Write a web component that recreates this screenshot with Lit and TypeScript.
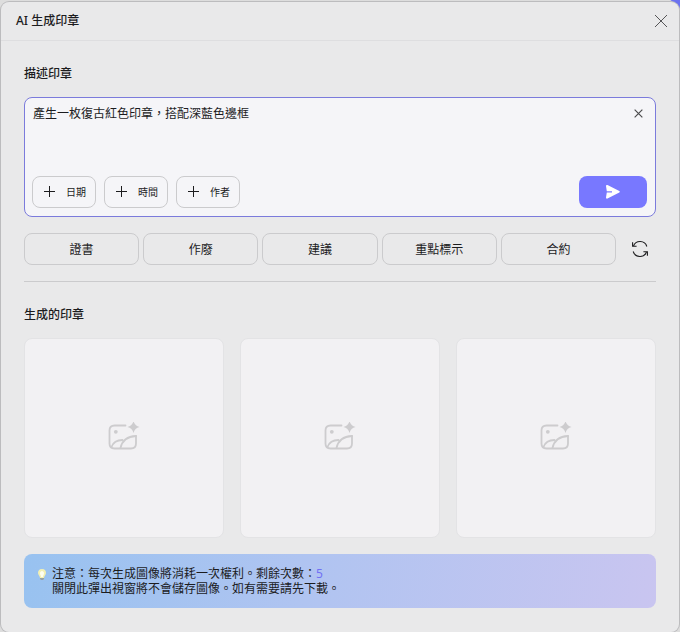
import { LitElement, html, css, svg } from "lit";
import { customElement, state } from "lit/decorators.js";

const TAGS = ["日期", "時間", "作者"];
const PRESETS = ["證書", "作廢", "建議", "重點標示", "合約"];

const crossIcon = svg`<path d="M2 2L14 14M14 2L2 14" fill="none" stroke="currentColor" />`;

@customElement("stamp-slot")
class StampSlot extends LitElement {
  static styles = css`
    :host {
      display: flex;
      align-items: center;
      justify-content: center;
      box-sizing: border-box;
      aspect-ratio: 1;
      border: 1px solid #e3e3e5;
      border-radius: 8px;
      background: #f2f1f3;
      color: #cdccce;
    }
    .picture {
      display: block;
      width: 32px;
      height: 32px;
    }
  `;

  render() {
    return html`
      <svg class="picture" viewBox="0 0 32 32" aria-hidden="true">
        <g fill="none" stroke="currentColor" stroke-width="1.800" stroke-linecap="round">
          <path d="M17.500 3.500H6.500Q1.500 3.500 1.500 8.500V21.500Q1.500 26.500 6.500 26.500H23Q28 26.500 28 21.500V14" />
          <path d="M3.500 25Q6 18 14.500 18" />
          <path d="M12.500 26Q15 14.500 28 14" />
        </g>
        <circle cx="7.800" cy="9.800" r="1.900" fill="currentColor" />
        <path d="M25.500 -1Q26.800 4 31.500 5Q26.800 6 25.500 11Q24.200 6 19.500 5Q24.200 4 25.500 -1Z" fill="currentColor" />
      </svg>
    `;
  }
}

@customElement("app-root")
class AppRoot extends LitElement {
  @state() private prompt = "產生一枚復古紅色印章，搭配深藍色邊框";

  static styles = css`
    :host {
      display: block;
      box-sizing: border-box;
      min-height: 100vh;
      padding: 2px 1px 1px;
      background: linear-gradient(to bottom left, #6c72f0 6px, #dddddd 7px);
      font-family: "Noto Sans", "Noto Sans CJK TC", sans-serif;
      font-size: 12px;
      line-height: 18px;
      color: #1c1c1e;
    }
    *,
    *::before {
      box-sizing: border-box;
    }
    button,
    textarea {
      margin: 0;
      padding: 0;
      font: inherit;
      color: inherit;
      background: none;
      border: 0;
    }
    button {
      cursor: pointer;
    }
    svg {
      display: block;
      flex: none;
    }
    .dialog {
      min-height: calc(100vh - 3px);
      border-radius: 8px;
      background: #e9e9ea;
      box-shadow: 0 0 0 1px #bcbcbe;
    }
    .header {
      display: flex;
      align-items: center;
      justify-content: space-between;
      height: 39px;
      padding: 0 10px 1px 15px;
      border-bottom: 1px solid #dedee0;
    }
    .title,
    .heading {
      margin: 0;
      font-size: 12px;
      line-height: 18px;
      font-weight: 500;
    }
    .close {
      display: flex;
      color: #555557;
    }
    .body {
      display: flex;
      flex-direction: column;
      gap: 16px;
      padding: 24px 23px;
    }
    .heading {
      margin-bottom: -2px;
    }
    .composer {
      display: flex;
      flex-direction: column;
      justify-content: space-between;
      min-height: 120px;
      padding: 7px 8px 8px 7px;
      border: 1px solid #7b7bdc;
      border-radius: 8px;
      background: #f5f5f8;
    }
    .entry {
      display: flex;
      align-items: flex-start;
      gap: 8px;
    }
    .prompt {
      display: block;
      flex: 1;
      min-width: 0;
      height: 64px;
      padding-left: 1px;
      resize: none;
      outline: none;
    }
    .clear {
      display: flex;
      padding: 4px;
      color: #4a4a4c;
    }
    .tools {
      display: flex;
      align-items: center;
      gap: 8px;
    }
    .tag {
      display: flex;
      align-items: center;
      justify-content: space-between;
      width: 64px;
      height: 32px;
      padding: 0 9px;
      border: 1px solid #cbcbcd;
      border-radius: 8px;
      font-size: 10px;
    }
    .send {
      display: flex;
      align-items: center;
      justify-content: center;
      width: 68px;
      height: 32px;
      margin-left: auto;
      border-radius: 8px;
      background: #7878ff;
      color: #ffffff;
    }
    .presets {
      display: flex;
      align-items: center;
      gap: 4px;
    }
    .preset {
      flex: 1;
      height: 32px;
      padding-top: 1px;
      border: 1px solid #cbcbcd;
      border-radius: 8px;
    }
    .refresh {
      display: flex;
      align-items: center;
      justify-content: center;
      width: 36px;
      height: 32px;
      padding-left: 4px;
    }
    .rule {
      width: 100%;
      height: 1px;
      margin: 0;
      border: 0;
      background: #cbcbcd;
    }
    .results {
      padding-top: 8px;
    }
    .slots {
      display: grid;
      grid-template-columns: repeat(3, 1fr);
      gap: 16px;
    }
    .notice {
      display: flex;
      gap: 4px;
      padding: 12px;
      border-radius: 8px;
      background: linear-gradient(100deg, #98c2f0, #b0c4f1 45%, #c9c5f0);
      line-height: 15px;
    }
    .text {
      margin: 0;
    }
    .count {
      color: #7070f4;
    }
  `;

  render() {
    return html`
      <main class="dialog" role="dialog" aria-labelledby="title">
        <header class="header">
          <h1 class="title" id="title">AI 生成印章</h1>
          <button class="close" type="button" aria-label="關閉">
            <svg width="16" height="16" viewBox="0 0 16 16">${crossIcon}</svg>
          </button>
        </header>
        <div class="body">
          <label class="heading" for="prompt">描述印章</label>
          <section class="composer">
            <div class="entry">
              <textarea
                class="prompt"
                id="prompt"
                spellcheck="false"
                .value=${this.prompt}
                @input=${(e: Event) => (this.prompt = (e.target as HTMLTextAreaElement).value)}
              ></textarea>
              <button class="clear" type="button" aria-label="清除" @click=${() => (this.prompt = "")}>
                <svg width="9" height="9" viewBox="1 1 14 14">
                  <path d="M2 2L14 14M14 2L2 14" fill="none" stroke="currentColor" stroke-width="1.800" />
                </svg>
              </button>
            </div>
            <div class="tools">
              ${TAGS.map(
                (tag) => html`
                  <button class="tag" type="button">
                    <svg width="16" height="16" viewBox="0 0 16 16" aria-hidden="true">
                      <path d="M2 7.500H13M7.500 2V13" fill="none" stroke="currentColor" />
                    </svg>
                    <span>${tag}</span>
                  </button>
                `
              )}
              <button class="send" type="button" aria-label="送出">
                <svg width="16" height="16" viewBox="0 0 16 16">
                  <path
                    d="M1 2Q1 .5 2.500 1L14.300 7Q15.500 7.800 14.300 8.500L2.500 14.500Q1 15 1 13.500L1.800 8.400H7V7.200H1.800Z"
                    fill="currentColor"
                  />
                </svg>
              </button>
            </div>
          </section>
          <div class="presets">
            ${PRESETS.map((name) => html`<button class="preset" type="button">${name}</button>`)}
            <button class="refresh" type="button" aria-label="換一批">
              <svg width="16" height="16" viewBox="0 0 16 16">
                <g fill="none" stroke="currentColor" stroke-width="1.100">
                  <path d="M1.500 5A7 6.800 0 0 1 14.800 5.500" />
                  <path d="M.6 1.200V5.300H4.600" />
                  <path d="M14.500 11A7 6.800 0 0 1 1.200 10.500" />
                  <path d="M15.400 14.800V10.700H11.400" />
                </g>
              </svg>
            </button>
          </div>
          <hr class="rule" />
          <h2 class="heading results">生成的印章</h2>
          <div class="slots">
            <stamp-slot></stamp-slot>
            <stamp-slot></stamp-slot>
            <stamp-slot></stamp-slot>
          </div>
          <aside class="notice">
            <svg width="12" height="16" viewBox="0 0 12 16" aria-hidden="true">
              <path d="M6 3C3 3 2 5 2 7C2 9 4 10 4 12H8C8 10 10 9 10 7C10 5 9 3 6 3Z" fill="#f3f0b4" />
              <path d="M6 5C5 5 4 6 4 7C4 9 5 9 5 11H7C7 9 8 9 8 7C8 6 7 5 6 5Z" fill="#fffff0" />
              <path d="M4 12H8V13L7 14H5L4 13Z" fill="#96a1a6" />
            </svg>
            <p class="text">
              注意：每次生成圖像將消耗一次權利。剩餘次數：<span class="count">5</span><br />
              關閉此彈出視窗將不會儲存圖像。如有需要請先下載。
            </p>
          </aside>
        </div>
      </main>
    `;
  }
}
